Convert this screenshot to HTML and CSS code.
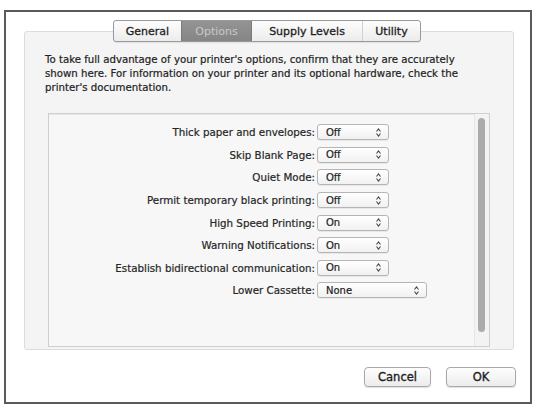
FILE: index.html
```html
<!DOCTYPE html>
<html>
<head>
<meta charset="utf-8">
<link rel="stylesheet" href="styles.css">
</head>
<body>
<div class="window">
  <div class="tabs">
    <div class="tab t-general">General</div>
    <div class="tab t-options selected">Options</div>
    <div class="tab t-supply">Supply Levels</div>
    <div class="tab t-utility">Utility</div>
  </div>
  <div class="group">
    <p class="desc">To take full advantage of your printer's options, confirm that they are accurately shown here. For information on your printer and its optional hardware, check the printer's documentation.</p>
    <div class="list">
      <div class="rows">
        <div class="label">Thick paper and envelopes:</div><div class="popup">Off<svg class="arr" viewBox="0 0 5 9"><path d="M0.5 3.5 L2.5 1 L4.5 3.5 M0.5 5.5 L2.5 8 L4.5 5.5"/></svg></div>
        <div class="label">Skip Blank Page:</div><div class="popup">Off<svg class="arr" viewBox="0 0 5 9"><path d="M0.5 3.5 L2.5 1 L4.5 3.5 M0.5 5.5 L2.5 8 L4.5 5.5"/></svg></div>
        <div class="label">Quiet Mode:</div><div class="popup">Off<svg class="arr" viewBox="0 0 5 9"><path d="M0.5 3.5 L2.5 1 L4.5 3.5 M0.5 5.5 L2.5 8 L4.5 5.5"/></svg></div>
        <div class="label">Permit temporary black printing:</div><div class="popup">Off<svg class="arr" viewBox="0 0 5 9"><path d="M0.5 3.5 L2.5 1 L4.5 3.5 M0.5 5.5 L2.5 8 L4.5 5.5"/></svg></div>
        <div class="label">High Speed Printing:</div><div class="popup">On<svg class="arr" viewBox="0 0 5 9"><path d="M0.5 3.5 L2.5 1 L4.5 3.5 M0.5 5.5 L2.5 8 L4.5 5.5"/></svg></div>
        <div class="label">Warning Notifications:</div><div class="popup">On<svg class="arr" viewBox="0 0 5 9"><path d="M0.5 3.5 L2.5 1 L4.5 3.5 M0.5 5.5 L2.5 8 L4.5 5.5"/></svg></div>
        <div class="label">Establish bidirectional communication:</div><div class="popup">On<svg class="arr" viewBox="0 0 5 9"><path d="M0.5 3.5 L2.5 1 L4.5 3.5 M0.5 5.5 L2.5 8 L4.5 5.5"/></svg></div>
        <div class="label">Lower Cassette:</div><div class="popup wide">None<svg class="arr" viewBox="0 0 5 9"><path d="M0.5 3.5 L2.5 1 L4.5 3.5 M0.5 5.5 L2.5 8 L4.5 5.5"/></svg></div>
      </div>
      <div class="track"><div class="thumb"></div></div>
    </div>
  </div>
  <div class="buttons">
    <div class="btn cancel">Cancel</div>
    <div class="btn ok">OK</div>
  </div>
</div>
</body>
</html>
```

FILE: styles.css
```css
html, body {
  margin: 0;
  padding: 0;
  background: #ffffff;
}
body {
  font-family: "DejaVu Sans", "Liberation Sans", sans-serif;
  color: #2a2a2a;
}
.window {
  margin: 10px 5px 0 4px;
  width: 524px;
  height: 390px;
  border: 2px solid #5a5a5a;
  background: #ffffff;
  display: flex;
  flex-direction: column;
}
.tabs {
  position: relative;
  z-index: 1;
  align-self: center;
  margin-top: 8px;
  margin-left: -2px;
  height: 20px;
  display: flex;
  border: 1px solid #9a9a9a;
  border-radius: 3px;
  background: linear-gradient(#fdfdfd, #ececec);
  box-shadow: 0 1px 1px rgba(0,0,0,0.08);
}
.tab {
  display: flex;
  align-items: center;
  justify-content: center;
  font-size: 11px;
  color: #1e1e1e;
  -webkit-text-stroke: 0.3px #1e1e1e;
  border-left: 1px solid #d0d0d0;
}
.tab:first-child { border-left: none; }
.t-general { width: 67px; }
.t-options { width: 69px; }
.t-supply { width: 110px; }
.t-utility { width: 57px; }
.tab.selected {
  background: linear-gradient(#949494, #858585);
  color: #c9c9c9;
  -webkit-text-stroke: 0;
  border-left: 1px solid #7a7a7a;
}
.tab.selected + .tab { border-left: 1px solid #7a7a7a; }
.group {
  margin: -11px 16px 0 18px;
  height: 296px;
  border: 1px solid #dcdcdc;
  border-radius: 3px;
  background: #f4f4f4;
  padding: 21px 0 0 20px;
  box-sizing: content-box;
}
.desc {
  margin: 0;
  width: 426px;
  font-size: 10.2px;
  line-height: 14px;
  color: #222;
  -webkit-text-stroke: 0.2px #222;
}
.list {
  margin: 18px 0 0 3px;
  width: 440px;
  height: 232px;
  border: 1px solid #cfcfcf;
  background: #f7f7f7;
  display: flex;
  box-shadow: inset 0 1px 0 #e6e6e6;
}
.rows {
  flex: 1;
  padding-top: 7px;
  display: grid;
  grid-template-columns: 266px auto;
  grid-auto-rows: 22.6px;
  column-gap: 2px;
  align-items: center;
  justify-items: start;
  align-content: start;
}
.label {
  justify-self: end;
  font-size: 10.3px;
  color: #262626;
  -webkit-text-stroke: 0.2px #262626;
  white-space: nowrap;
}
.popup {
  height: 14px;
  border: 1px solid #b5b5b5;
  border-radius: 3px;
  background: linear-gradient(#ffffff, #f1f1f1);
  box-shadow: 0 1px 0 rgba(0,0,0,0.06);
  display: flex;
  align-items: center;
  justify-content: space-between;
  padding: 0 7px 0 8px;
  box-sizing: content-box;
  width: 55px;
  font-size: 10px;
  color: #222;
  -webkit-text-stroke: 0.2px #222;
}
.popup.wide { width: 93px; }
.arr {
  width: 5px;
  height: 9px;
  fill: none;
  stroke: #444;
  stroke-width: 1.1;
}
.track {
  width: 14px;
  border-left: 1px solid #e6e6e6;
  background: #f3f3f3;
  display: flex;
  justify-content: center;
  padding-top: 4px;
}
.thumb {
  margin-left: -2px;
  width: 7px;
  height: 214px;
  border-radius: 4px;
  background: #ababab;
}
.buttons {
  display: flex;
  justify-content: flex-end;
  gap: 15px;
  margin-top: 17px;
  padding-right: 14px;
}
.btn {
  height: 18px;
  border: 1px solid #a8a8a8;
  border-radius: 4px;
  background: linear-gradient(#fefefe, #ececec);
  box-shadow: 0 1px 1px rgba(0,0,0,0.12);
  display: flex;
  align-items: center;
  justify-content: center;
  font-size: 11.5px;
  color: #1e1e1e;
  -webkit-text-stroke: 0.35px #1e1e1e;
}
.cancel { width: 65px; }
.ok { width: 68px; }
```
